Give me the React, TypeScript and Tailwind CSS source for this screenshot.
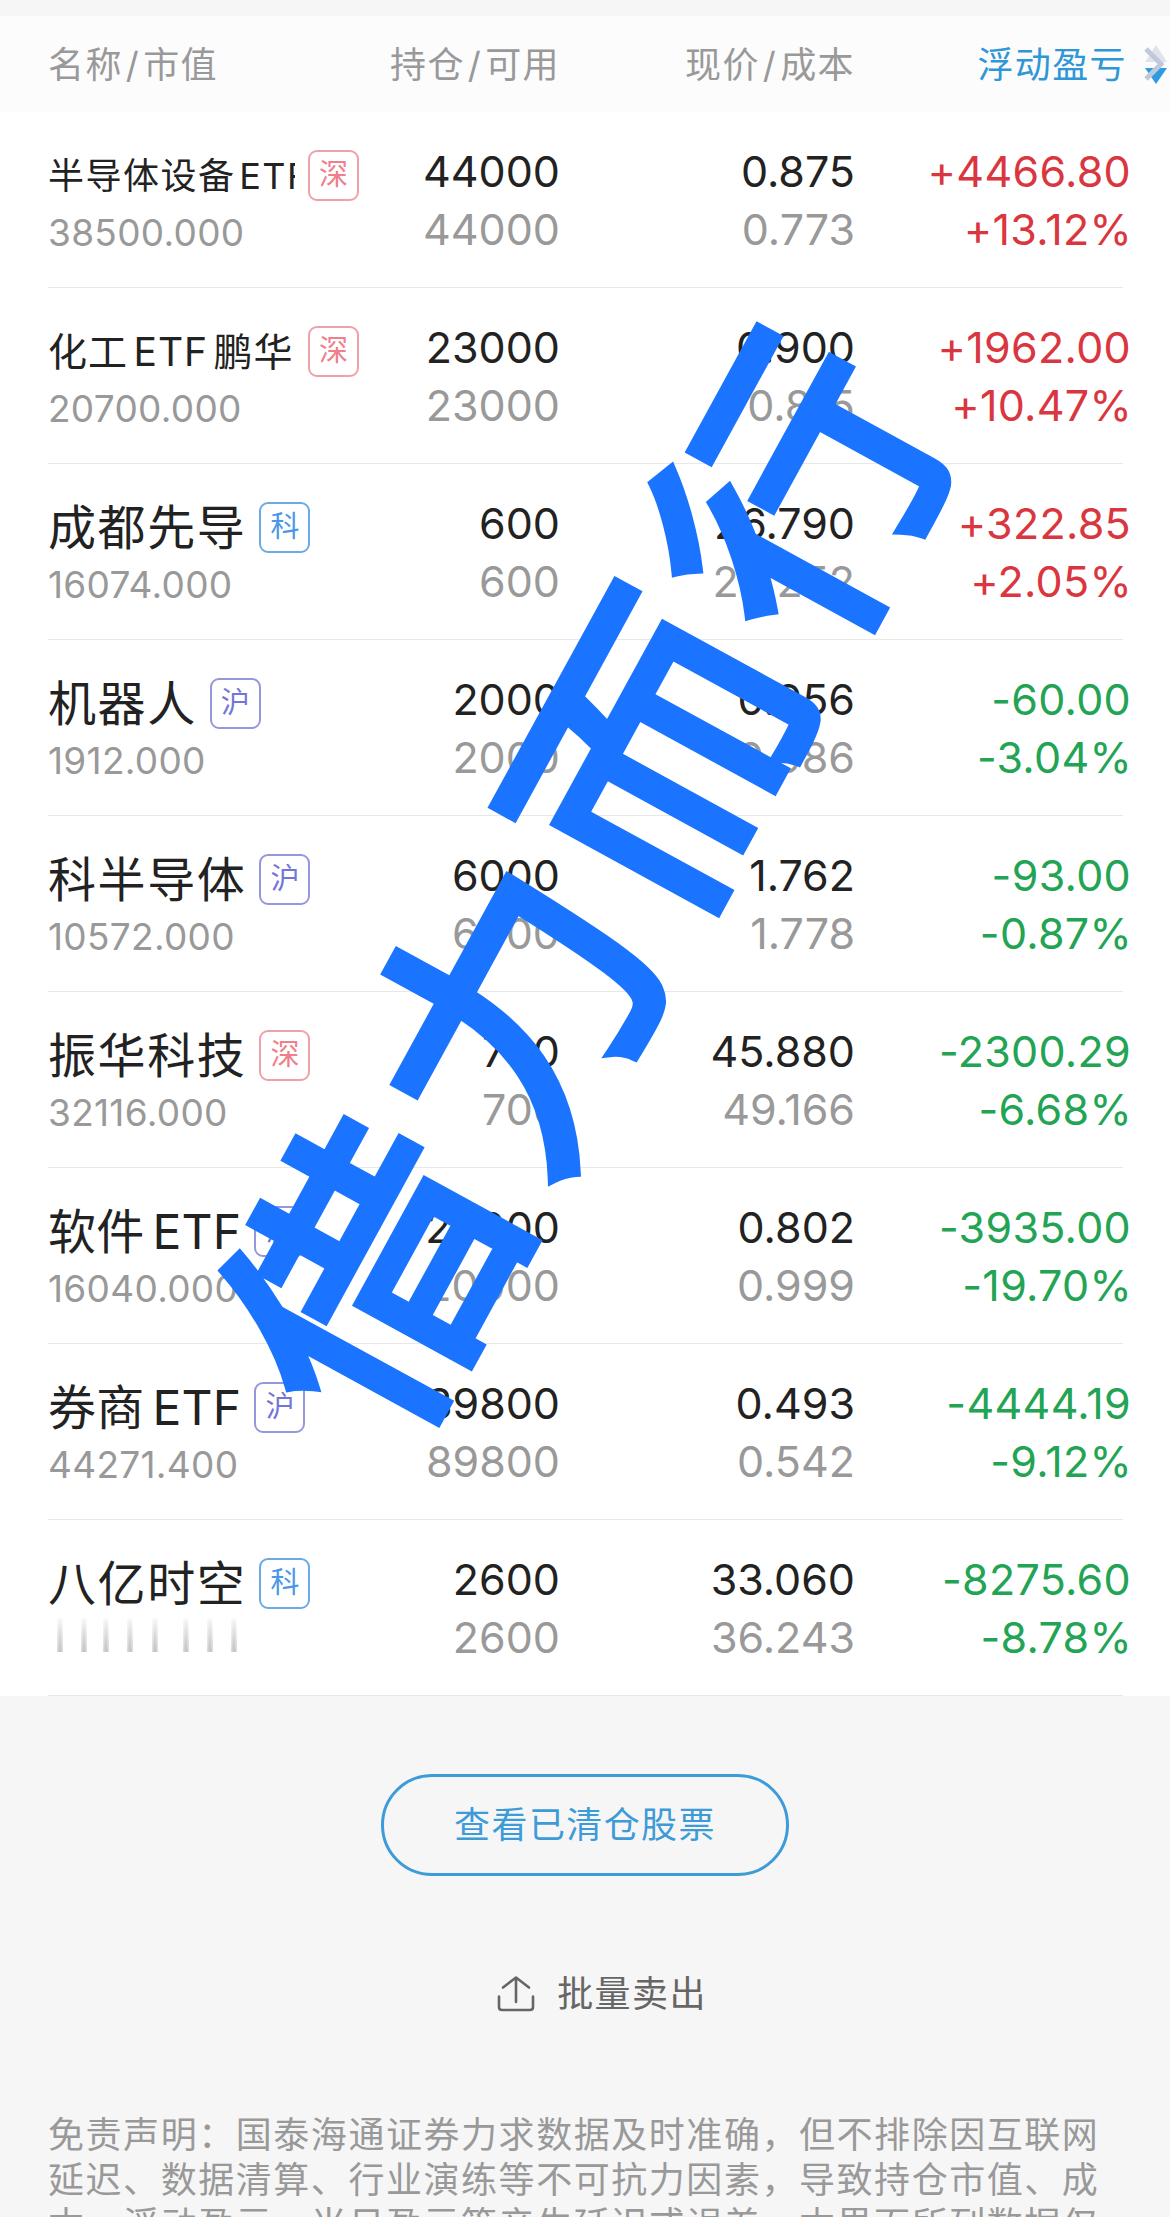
import React from "react";

const badges = {
  深: "border-[#f0a0a8] text-[#ef7f8a]",
  科: "border-[#6aaae6] text-[#4a97e8]",
  沪: "border-[#9597dd] text-[#7376d6]",
};

type Holding = {
  name: string;
  size: string;
  market: keyof typeof badges;
  value: string;
  amount: string;
  usable: string;
  price: string;
  cost: string;
  profit: string;
  rate: string;
};

const big = "text-[48px] tracking-[1.6px]";
const bigEtf = "text-[48px] tracking-[0.3px] [word-spacing:-6px]";

const holdings: Holding[] = [
  { name: "半导体设备 ETF", size: "w-[247px] text-[36px] tracking-[1.5px] [word-spacing:-8px]", market: "深", value: "38500.000", amount: "44000", usable: "44000", price: "0.875", cost: "0.773", profit: "+4466.80", rate: "+13.12%" },
  { name: "化工 ETF 鹏华", size: "w-[247px] text-[39px] tracking-[1px] [word-spacing:-6.5px]", market: "深", value: "20700.000", amount: "23000", usable: "23000", price: "0.900", cost: "0.815", profit: "+1962.00", rate: "+10.47%" },
  { name: "成都先导", size: big, market: "科", value: "16074.000", amount: "600", usable: "600", price: "26.790", cost: "26.252", profit: "+322.85", rate: "+2.05%" },
  { name: "机器人", size: big, market: "沪", value: "1912.000", amount: "2000", usable: "2000", price: "0.956", cost: "0.986", profit: "-60.00", rate: "-3.04%" },
  { name: "科半导体", size: big, market: "沪", value: "10572.000", amount: "6000", usable: "6000", price: "1.762", cost: "1.778", profit: "-93.00", rate: "-0.87%" },
  { name: "振华科技", size: big, market: "深", value: "32116.000", amount: "700", usable: "700", price: "45.880", cost: "49.166", profit: "-2300.29", rate: "-6.68%" },
  { name: "软件 ETF", size: bigEtf, market: "沪", value: "16040.000", amount: "20000", usable: "20000", price: "0.802", cost: "0.999", profit: "-3935.00", rate: "-19.70%" },
  { name: "券商 ETF", size: bigEtf, market: "沪", value: "44271.400", amount: "89800", usable: "89800", price: "0.493", cost: "0.542", profit: "-4444.19", rate: "-9.12%" },
  { name: "八亿时空", size: big, market: "科", value: "", amount: "2600", usable: "2600", price: "33.060", cost: "36.243", profit: "-8275.60", rate: "-8.78%" },
];

const smears = [12, 36, 58, 82, 107, 138, 162, 186];

const disclaimer = [
  "免责声明：国泰海通证券力求数据及时准确，但不排除因互联网",
  "延迟、数据清算、行业演练等不可抗力因素，导致持仓市值、成",
  "本、浮动盈亏、当日盈亏等产生延迟或误差，本界面所列数据仅",
];

function Pair({ top, bottom, className }: { top: string; bottom: string; className: string }) {
  return (
    <div className={"flex flex-col pt-[30px] text-right text-[43px] leading-[58px] " + className}>
      <div>{top}</div>
      <div>{bottom}</div>
    </div>
  );
}

function Heading({ left, right, className }: { left: string; right: string; className: string }) {
  return (
    <div className={className}>
      {left}
      <span className="mx-[3px]">/</span>
      {right}
    </div>
  );
}

function SortIcon() {
  return (
    <svg className="ml-[17px] h-[44px] w-[24px] shrink-0" viewBox="0 0 24 44">
      <path d="M12 2 L23 19 H1 Z" fill="#e0e3ea" />
      <path d="M1 25 H23 L12 41 Z" fill="#2f9be0" />
      <path d="M2 6 L17 21 L2 36" fill="none" stroke="#c0c9dc" strokeWidth="5" />
    </svg>
  );
}

function Row({ item }: { item: Holding }) {
  const tone = item.profit.startsWith("+") ? "text-[#d93640]" : "text-[#22a454]";
  return (
    <div className="ml-12 mr-[47px] flex h-44 border-b border-[#e8e8e8]">
      <div className="w-[324px] pt-[37px]">
        <div className="flex h-[52px] items-center gap-[13px]">
          <div className={"overflow-hidden whitespace-nowrap pt-[2px] leading-[60px] text-[#222] " + item.size}>{item.name}</div>
          <div className={"flex h-[51px] w-[51px] shrink-0 items-center justify-center rounded-[9px] border-2 text-[29px] " + badges[item.market]}>
            {item.market}
          </div>
        </div>
        {item.value ? (
          <div className="pt-[9px] text-[37px] leading-[46px] tracking-[0.3px] text-[#999]">{item.value}</div>
        ) : (
          <svg className="mt-[9px] h-[34px] w-[200px]" viewBox="0 0 200 34">
            <defs>
              <linearGradient id="smear" x1="0" y1="0" x2="0" y2="1">
                <stop offset="0" stopColor="#999" stopOpacity="0.03" />
                <stop offset="1" stopColor="#999" stopOpacity="0.36" />
              </linearGradient>
            </defs>
            {smears.map((x) => (
              <g key={x} fill="url(#smear)">
                <rect x={x - 3} y="0" width="6" height="34" />
                <rect x={x - 1.5} y="0" width="3" height="34" />
              </g>
            ))}
          </svg>
        )}
      </div>
      <Pair top={item.amount} bottom={item.usable} className="w-[188px] text-[#222] [&>div:last-child]:text-[#999]" />
      <Pair top={item.price} bottom={item.cost} className="w-[295px] text-[#222] [&>div:last-child]:text-[#999]" />
      <Pair top={item.profit} bottom={item.rate} className={"-mr-[8px] w-[276px] tracking-[0.3px] [&>div:last-child]:-mr-px " + tone} />
    </div>
  );
}

function App() {
  return (
    <div className="relative h-[2217px] w-[1170px] overflow-hidden bg-[#f6f6f6] pt-4 font-['Inter','Noto_Sans_CJK_SC',sans-serif]">
      <div className="flex h-24 items-center bg-[#fcfcfc] pl-12 pt-0.5 text-[36px] tracking-[1.4px] text-[#999]">
        <Heading left="名称" right="市值" className="w-[324px]" />
        <Heading left="持仓" right="可用" className="w-[188px] text-right" />
        <Heading left="现价" right="成本" className="w-[295px] text-right" />
        <div className="w-[272px] text-right text-[#2f96d8]">浮动盈亏</div>
        <SortIcon />
      </div>
      <div className="bg-white">
        {holdings.map((item) => (
          <Row key={item.name} item={item} />
        ))}
      </div>
      <div className="mt-[78px] flex justify-center">
        <button className="h-[102px] w-[408px] rounded-full border-[3px] border-[#3d9bd8] text-[36px] tracking-[1.4px] text-[#3d9bd8]">
          查看已清仓股票
        </button>
      </div>
      <div className="mt-[92px] flex h-[52px] items-center justify-center gap-[22px] pl-[34px] text-[36px] tracking-[1.4px] text-[#666]">
        <svg className="h-[36px] w-[38px]" viewBox="0 0 38 36" fill="none" stroke="#666" strokeWidth="2.6" strokeLinecap="round" strokeLinejoin="round">
          <path d="M2 20.5 V31 Q2 34 5 34 H33 Q36 34 36 31 V20.5 M19 26 V2 M6 11.5 L19 1.5 L32 11.5" />
        </svg>
        批量卖出
      </div>
      <div className="ml-12 mt-[93px] whitespace-nowrap text-[36px] leading-[45px] tracking-[1.55px] text-[#999]">
        {disclaimer.map((line) => (
          <div key={line}>{line}</div>
        ))}
      </div>
      <div className="absolute left-[593px] top-[877px] -translate-x-1/2 -translate-y-1/2">
        <div className="-rotate-[61.3deg] whitespace-nowrap text-[283px] leading-none tracking-[15.5px] text-[#1a74ff] [-webkit-text-stroke:10.5px_#1a74ff]">
          借力而行
        </div>
      </div>
    </div>
  );
}

export default App;
